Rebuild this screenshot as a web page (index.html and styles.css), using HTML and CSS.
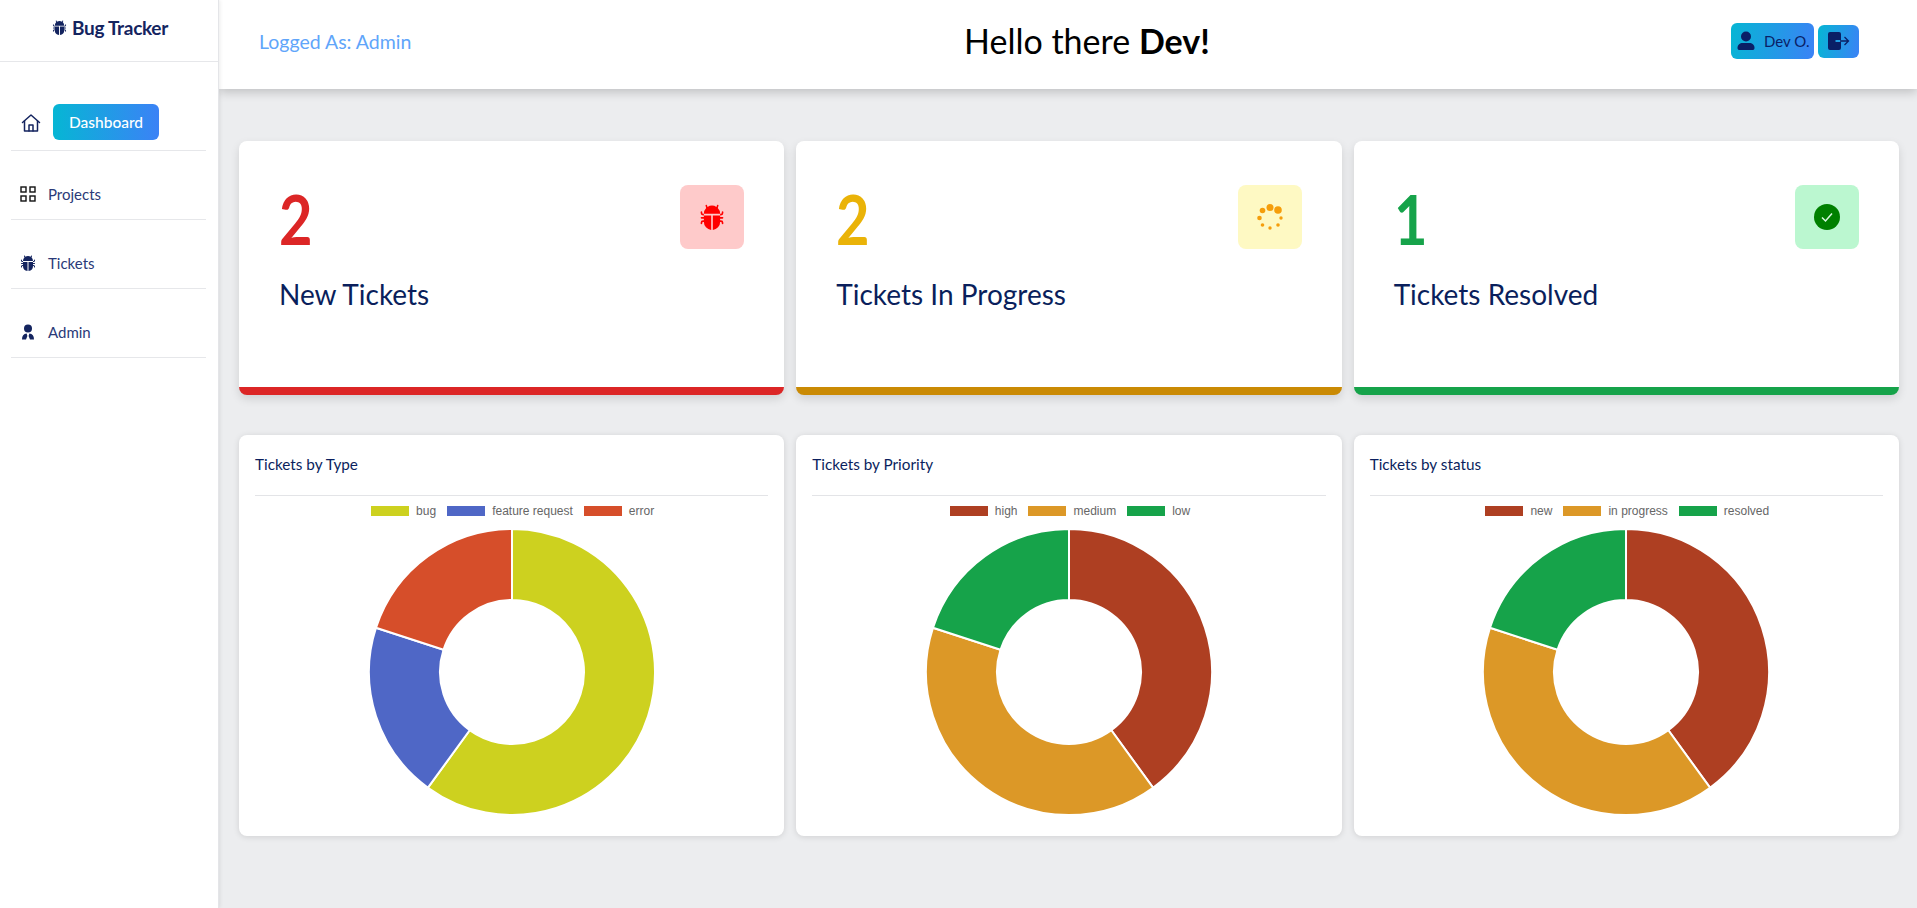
FILE: index.html
```html
<!DOCTYPE html>
<html lang="en">
<head>
    <meta charset="UTF-8">
    <meta name="viewport" content="width=device-width, initial-scale=1.0">
    <title>Bug Tracker</title>
    <link rel="stylesheet" href="styles.css">
</head>
<body>
    <svg class="defs" width="0" height="0">
        <symbol id="bug" viewBox="0 0 16 16">
            <path d="M4.978.855a.5.5 0 1 0-.956.29l.41 1.352A4.985 4.985 0 0 0 3 6h10a4.985 4.985 0 0 0-1.432-3.503l.41-1.352a.5.5 0 1 0-.956-.29l-.291.956A4.978 4.978 0 0 0 8 1a4.979 4.979 0 0 0-2.731.811l-.29-.956z"/>
            <path d="M13 6v1H8.5v8.975A5 5 0 0 0 13 11h.5a.5.5 0 0 1 .5.5v.5a.5.5 0 1 0 1 0v-.5a1.5 1.5 0 0 0-1.5-1.5H13V9h1.5a.5.5 0 0 0 0-1H13V7h.5A1.5 1.5 0 0 0 15 5.5V5a.5.5 0 0 0-1 0v.5a.5.5 0 0 1-.5.5H13zm-5.5 9.975V7H3V6h-.5a.5.5 0 0 1-.5-.5V5a.5.5 0 0 0-1 0v.5A1.5 1.5 0 0 0 2.5 7H3v1H1.5a.5.5 0 0 0 0 1H3v1h-.5A1.5 1.5 0 0 0 1 11.5v.5a.5.5 0 1 0 1 0v-.5a.5.5 0 0 1 .5-.5H3a5 5 0 0 0 4.5 4.975z"/>
        </symbol>
    </svg>

    <div class="layout">
        <aside class="sidebar">
            <div class="logo">
                <svg class="logo-icon" width="15" height="15"><use href="#bug"/></svg>
                <span>Bug Tracker</span>
            </div>
            <nav class="nav">
                <div class="nav-row nav-row-active">
                    <svg class="home-icon" width="20" height="20" viewBox="0 0 20 20" fill="none" stroke="currentColor" stroke-width="1.5" stroke-linejoin="round" stroke-linecap="round">
                        <path d="M1.5 9.5 10 2l8.5 7.5"/>
                        <path d="M3.5 8v10h13V8"/>
                        <path d="M8 18v-6h4v6"/>
                    </svg>
                    <a class="nav-button">Dashboard</a>
                </div>
                <div class="nav-row">
                    <svg class="nav-icon nav-icon-grid" width="16" height="16" viewBox="0 0 16 16">
                        <rect x="1" y="1" width="5" height="5"/>
                        <rect x="10" y="1" width="5" height="5"/>
                        <rect x="1" y="10" width="5" height="5"/>
                        <rect x="10" y="10" width="5" height="5"/>
                    </svg>
                    <a>Projects</a>
                </div>
                <div class="nav-row">
                    <svg class="nav-icon" width="16" height="16"><use href="#bug"/></svg>
                    <a>Tickets</a>
                </div>
                <div class="nav-row">
                    <svg class="nav-icon" width="16" height="16" viewBox="0 0 16 16">
                        <circle cx="8" cy="4.5" r="4"/>
                        <path d="M2 15.5c0-3.6 1.6-5.7 4.600-6L7.400 12 6 15.500zM14 15.500c0-3.600-1.600-5.700-4.600-6L8.600 12 10 15.500z"/>
                    </svg>
                    <a>Admin</a>
                </div>
            </nav>
        </aside>

        <main class="main">
            <header class="topbar">
                <div class="logged">Logged As: Admin</div>
                <h1 class="hello">Hello there <b>Dev!</b></h1>
                <div class="user-box">
                    <button class="user-button">
                        <svg width="20" height="20" viewBox="0 0 20 20">
                            <circle cx="10" cy="5.500" r="5"/>
                            <path d="M1.500 17c0-3.500 2.500-5 5-5h7c2.500 0 5 1.500 5 5 0 1.500-1 2-2 2h-13c-1 0-2-.5-2-2z"/>
                        </svg>
                        <span>Dev O.</span>
                    </button>
                    <button class="logout-button">
                        <svg width="22" height="18" viewBox="0 0 22 18">
                            <path d="M2 0h9a2 2 0 0 1 2 2v6H7.500v2H13v6a2 2 0 0 1-2 2H2a2 2 0 0 1-2-2V2a2 2 0 0 1 2-2z"/>
                            <path d="M12 9h8.500M16.500 5l4 4-4 4" fill="none" stroke="currentColor" stroke-width="1.300"/>
                        </svg>
                    </button>
                </div>
            </header>

            <section class="content">
                <div class="stats">
                    <div class="stat stat-red">
                        <div class="stat-body">
                            <div>
                                <div class="stat-number">2</div>
                                <div class="stat-title">New Tickets</div>
                            </div>
                            <div class="stat-icon">
                                <svg width="26" height="26"><use href="#bug"/></svg>
                            </div>
                        </div>
                    </div>
                    <div class="stat stat-yellow">
                        <div class="stat-body">
                            <div>
                                <div class="stat-number">2</div>
                                <div class="stat-title">Tickets In Progress</div>
                            </div>
                            <div class="stat-icon">
                                <svg width="26" height="26" viewBox="0 0 26 26">
                                    <circle cx="13" cy="3.500" r="3.500"/>
                                    <circle cx="21" cy="6" r="3.800"/>
                                    <circle cx="5.500" cy="6.500" r="2.800"/>
                                    <circle cx="2.500" cy="14" r="2.300"/>
                                    <circle cx="24" cy="14" r="1.700"/>
                                    <circle cx="5.500" cy="21" r="1.800"/>
                                    <circle cx="21" cy="21" r="1.800"/>
                                    <circle cx="13" cy="24" r="1.700"/>
                                </svg>
                            </div>
                        </div>
                    </div>
                    <div class="stat stat-green">
                        <div class="stat-body">
                            <div>
                                <div class="stat-number">1</div>
                                <div class="stat-title">Tickets Resolved</div>
                            </div>
                            <div class="stat-icon">
                                <svg width="26" height="26" viewBox="0 0 26 26">
                                    <circle cx="13" cy="13" r="13"/>
                                    <path d="M8 13.500l3.500 3.500L18 9.500" fill="none" stroke="#d8f8e0" stroke-width="1.500"/>
                                </svg>
                            </div>
                        </div>
                    </div>
                </div>

                <div class="charts">
                    <div class="chart-card">
                        <div class="chart-title">Tickets by Type</div>
                        <ul class="legend">
                            <li><i class="swatch c-lime"></i>bug</li>
                            <li><i class="swatch c-blue"></i>feature request</li>
                            <li><i class="swatch c-orange"></i>error</li>
                        </ul>
                        <svg class="donut" width="290" height="290" viewBox="-145 -145 290 290">
                            <path class="c-lime" d="M0-143A143 143 0 1 1-84.05 115.69L-42.32 58.25A72 72 0 1 0 0-72Z"/>
                            <path class="c-blue" d="M-84.05 115.69A143 143 0 0 1-136-44.19L-68.48-22.25A72 72 0 0 0-42.32 58.25Z"/>
                            <path class="c-orange" d="M-136-44.19A143 143 0 0 1 0-143L0-72A72 72 0 0 0-68.48-22.25Z"/>
                        </svg>
                    </div>
                    <div class="chart-card">
                        <div class="chart-title">Tickets by Priority</div>
                        <ul class="legend">
                            <li><i class="swatch c-brown"></i>high</li>
                            <li><i class="swatch c-amber"></i>medium</li>
                            <li><i class="swatch c-green"></i>low</li>
                        </ul>
                        <svg class="donut" width="290" height="290" viewBox="-145 -145 290 290">
                            <path class="c-brown" d="M0-143A143 143 0 0 1 84.05 115.69L42.32 58.25A72 72 0 0 0 0-72Z"/>
                            <path class="c-amber" d="M84.05 115.69A143 143 0 0 1-136-44.19L-68.48-22.25A72 72 0 0 0 42.32 58.25Z"/>
                            <path class="c-green" d="M-136-44.19A143 143 0 0 1 0-143L0-72A72 72 0 0 0-68.48-22.25Z"/>
                        </svg>
                    </div>
                    <div class="chart-card">
                        <div class="chart-title">Tickets by status</div>
                        <ul class="legend">
                            <li><i class="swatch c-brown"></i>new</li>
                            <li><i class="swatch c-amber"></i>in progress</li>
                            <li><i class="swatch c-green"></i>resolved</li>
                        </ul>
                        <svg class="donut" width="290" height="290" viewBox="-145 -145 290 290">
                            <path class="c-brown" d="M0-143A143 143 0 0 1 84.05 115.69L42.32 58.25A72 72 0 0 0 0-72Z"/>
                            <path class="c-amber" d="M84.05 115.69A143 143 0 0 1-136-44.19L-68.48-22.25A72 72 0 0 0 42.32 58.25Z"/>
                            <path class="c-green" d="M-136-44.19A143 143 0 0 1 0-143L0-72A72 72 0 0 0-68.48-22.25Z"/>
                        </svg>
                    </div>
                </div>
            </section>
        </main>
    </div>
</body>
</html>
```

FILE: styles.css
```css
* {
    box-sizing: border-box;
}
body {
    margin: 0;
    font-family: Lato, "Open Sans", sans-serif;
    color: #0b1f5e;
    background-color: #ecedef;
}
.defs {
    display: block;
    height: 0;
}
.layout {
    display: flex;
    min-height: 908px;
}

/* sidebar */
.sidebar {
    width: 219px;
    flex-shrink: 0;
    background: white;
    border-right: 1px solid #e4e5e8;
    box-shadow: 1px 0 4px rgba(0, 0, 0, 0.08);
    position: relative;
    z-index: 2;
}
.logo {
    height: 62px;
    padding: 0 0 7px 2px;
    border-bottom: 1px solid #e6e7ea;
    display: flex;
    justify-content: center;
    align-items: center;
    gap: 5px;
    font-size: 19px;
    font-weight: 700;
    letter-spacing: -0.3px;
    color: #14245f;
}
.logo-icon, .nav-icon {
    fill: #14245f;
}
.nav {
    padding: 0 12px 0 11px;
}
.nav-row {
    height: 69px;
    padding-bottom: 13px;
    border-bottom: 1px solid #e6e7ea;
    display: flex;
    align-items: flex-end;
    gap: 12px;
    font-size: 15px;
    line-height: 24px;
    color: #2a3a78;
}
.nav-icon {
    margin: 0 0 4px 9px;
}
.nav-icon-grid {
    fill: none;
    stroke: #111;
    stroke-width: 1.4;
}
.nav-row-active {
    height: 89px;
    padding-bottom: 10px;
    gap: 12px;
}
.home-icon {
    margin: 0 0 7px 10px;
    color: #14245f;
}
.nav-button {
    width: 106px;
    height: 36px;
    line-height: 36px;
    text-align: center;
    border-radius: 6px;
    color: white;
    font-size: 15.500px;
    font-weight: 500;
    background: linear-gradient(90deg, #06b6d4, #3b82f6);
}

/* top bar */
.main {
    flex: 1;
}
.topbar {
    height: 89px;
    padding: 0 58px 0 40px;
    background: white;
    box-shadow: 0 3px 10px rgba(0, 0, 0, 0.2);
    display: grid;
    grid-template-columns: 705px auto 1fr;
    align-items: center;
}
.logged {
    font-size: 19.500px;
    color: #60a5fa;
    margin-top: -7px;
}
.hello {
    margin: -8px 0 0;
    font-size: 34px;
    font-weight: 400;
    color: black;
}
.hello b {
    font-weight: 700;
}
.user-box {
    display: flex;
    justify-content: flex-end;
    align-items: center;
    gap: 4px;
    margin-top: -7px;
}
.user-button, .logout-button {
    border: none;
    padding: 0;
    font-family: inherit;
    color: #0a1f66;
    fill: #0a1f66;
    border-radius: 6px;
    display: flex;
    align-items: center;
    background: linear-gradient(100deg, #06b6d4, #3b82f6);
}
.user-button {
    width: 83px;
    height: 36px;
    padding-left: 5px;
    gap: 8px;
    font-size: 15px;
}
.user-button span {
    white-space: nowrap;
}
.logout-button {
    width: 41px;
    height: 33px;
    justify-content: center;
}

/* stat cards */
.content {
    padding: 52px 18px 0 20px;
}
.stats, .charts {
    display: grid;
    grid-template-columns: repeat(3, 1fr);
    gap: 12px;
}
.stat {
    height: 254px;
    background: white;
    border-radius: 8px;
    border-bottom: 8px solid;
    box-shadow: 0 4px 10px rgba(0, 0, 0, 0.12);
}
.stat-body {
    display: flex;
    justify-content: space-between;
    padding: 44px 40px 0 40px;
}
.stat-number {
    width: 60px;
    margin-top: -4px;
    font-size: 68px;
    font-weight: 700;
    line-height: 76px;
    transform: scaleX(0.85);
    transform-origin: left;
}
.stat-title {
    margin-top: 17px;
    font-size: 28px;
    line-height: 40px;
    color: #0a1f5c;
}
.stat-icon {
    width: 64px;
    height: 64px;
    border-radius: 8px;
    display: flex;
    justify-content: center;
    align-items: center;
}
.stat-red { border-bottom-color: #dc2626; }
.stat-red .stat-number { color: #dc2626; }
.stat-red .stat-icon { background: #fecaca; fill: red; }
.stat-yellow { border-bottom-color: #ca8a04; }
.stat-yellow .stat-number { color: #eab308; }
.stat-yellow .stat-icon { background: #fef9c3; fill: #f59e0b; }
.stat-green { border-bottom-color: #16a34a; }
.stat-green .stat-number { color: #16a34a; }
.stat-green .stat-icon { background: #bbf7d0; fill: green; }

/* charts */
.charts {
    margin-top: 40px;
}
.chart-card {
    height: 401px;
    padding: 0 16px;
    background: white;
    border-radius: 8px;
    box-shadow: 0 1px 6px rgba(0, 0, 0, 0.12);
    display: flex;
    flex-direction: column;
    align-items: center;
}
.chart-title {
    width: 100%;
    height: 61px;
    padding-top: 19px;
    font-size: 15.300px;
    line-height: 20px;
    border-bottom: 1px solid #e3e4e7;
}
.legend {
    list-style: none;
    margin: 8px 0 0 2px;
    padding: 0;
    display: flex;
    gap: 11px;
    font-family: "Liberation Sans", Arial, sans-serif;
    font-size: 12px;
    line-height: 14px;
    color: #666;
}
.legend li {
    display: flex;
    align-items: center;
    gap: 7px;
}
.swatch {
    width: 38px;
    height: 10px;
    background: currentColor;
}
.donut {
    margin-top: 9px;
    stroke: white;
    stroke-width: 2;
}
.c-lime { color: #cdd11f; fill: #cdd11f; }
.c-blue { color: #4f67c6; fill: #4f67c6; }
.c-orange { color: #d64e2a; fill: #d64e2a; }
.c-brown { color: #ae3f22; fill: #ae3f22; }
.c-amber { color: #dc9827; fill: #dc9827; }
.c-green { color: #16a34a; fill: #16a34a; }
```
